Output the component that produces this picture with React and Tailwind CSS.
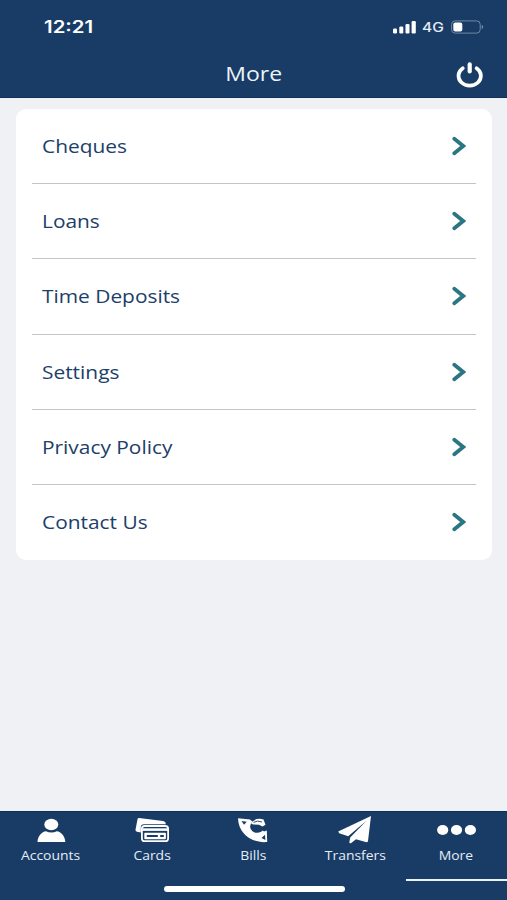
const items = ["Cheques", "Loans", "Time Deposits", "Settings", "Privacy Policy", "Contact Us"];

const tabs = [
  { label: "Accounts",  icon: <UserIcon /> },
  { label: "Cards",     icon: <CardsIcon /> },
  { label: "Bills",     icon: <BillsIcon /> },
  { label: "Transfers", icon: <PlaneIcon /> },
  { label: "More",      icon: <DotsIcon />, active: true },
];

export default function App() {
  return (
    <div className="flex h-[900px] w-[507px] flex-col overflow-hidden bg-[#eff1f5] font-['Open_Sans',sans-serif]">
      {/* Status bar + title */}
      <header className="h-[98px] shrink-0 border-b border-[#0f2f57] bg-[#183c66] text-white">
        <div className="flex h-[54px] items-center pl-[44px] pr-[23px]">
          <span className="origin-left scale-x-[1.2] font-['Inter',sans-serif] text-[17px] font-semibold leading-none">
            12:21
          </span>
          <div className="ml-auto flex items-center">
            <SignalIcon />
            <span className="ml-[6px] w-[22px] origin-left scale-x-[1.2] font-['Inter',sans-serif] text-[13px] font-medium leading-none text-[#e3ebf5]">
              4G
            </span>
            <BatteryIcon />
          </div>
        </div>
        <div className="grid h-[40px] grid-cols-[1fr_auto_1fr] items-center pr-[23px]">
          <h1 className="col-start-2 ml-[23px] scale-x-[1.15] text-[20px] leading-none text-[#eef3f9]">More</h1>
          <button className="mt-[2px] justify-self-end" aria-label="Log out">
            <PowerIcon />
          </button>
        </div>
      </header>

      {/* Menu */}
      <main className="flex-1 pl-4 pr-[15px] pt-[11px]">
        <ul className="flex h-[451px] flex-col rounded-[10px] bg-white px-4 pb-[1px]">
          {items.map((item) => (
            <li
              key={item}
              className="flex flex-1 items-center border-b-[1.5px] border-[#c4c5c8] pl-[10px] pr-[10px] last:border-b-0"
            >
              <span className="origin-left scale-x-[1.16] text-[18px] leading-none text-[#1c4069]">{item}</span>
              <ChevronIcon />
            </li>
          ))}
        </ul>
      </main>

      {/* Tab bar */}
      <nav className="flex h-[89px] shrink-0 flex-col border-t border-[#0f2f57] bg-[#183c66]">
        <div className="grid h-[69px] grid-cols-5">
          {tabs.map((tab) => (
            <div
              key={tab.label}
              className={`flex flex-col items-center border-b-2 pt-[3px] ${tab.active ? "border-[#e8f3fb]" : "border-transparent"}`}
            >
              {tab.icon}
              <span className="mt-[4px] scale-x-[1.16] text-[12px] leading-[14px] text-[#e6edf6]">{tab.label}</span>
            </div>
          ))}
        </div>
        <div className="ml-[164px] mt-[5px] h-[6px] w-[181px] rounded-full bg-white" />
      </nav>
    </div>
  );
}

// ── Icons ────────────────────────────────────────────────────────────────────
function SignalIcon() {
  return (
    <svg width="23" height="14" viewBox="0 0 23 14" fill="#fff">
      <rect x="0" y="8.5" width="4" height="5" rx="1.2" />
      <rect x="6.3" y="6.5" width="4" height="7" rx="1.2" />
      <rect x="12.5" y="4" width="4" height="9.5" rx="1.2" />
      <rect x="18.6" y="1" width="4.2" height="12.5" rx="1.2" />
    </svg>
  );
}

function BatteryIcon() {
  return (
    <svg className="ml-[7px]" width="33" height="14" viewBox="0 0 33 14">
      <rect x=".6" y=".9" width="28.6" height="12.2" rx="3.5" fill="none" stroke="#7189a5" strokeWidth="1" />
      <rect x="2.3" y="2.6" width="9" height="8.8" rx="2" fill="#fff" />
      <path d="M30.7 5c2 .5 2 3.5 0 4z" fill="#7189a5" />
    </svg>
  );
}

function PowerIcon() {
  return (
    <svg width="28" height="26" viewBox="0 0 28 26" fill="none" stroke="#fff" strokeLinecap="round">
      <path d="M6.8 6.3A11.2 9.7 0 1 0 20.6 6.3" strokeWidth="3.7" />
      <path d="M13.7 2.4v7" strokeWidth="4.2" />
    </svg>
  );
}

function ChevronIcon() {
  return (
    <svg className="ml-auto" width="14" height="20" viewBox="0 0 14 20" fill="none" stroke="#2b7683" strokeWidth="3.8" strokeLinecap="round">
      <path d="M2.3 2.8 11.2 10 2.3 17.2" strokeLinejoin="miter" />
    </svg>
  );
}

function UserIcon() {
  return (
    <svg width="36" height="30" viewBox="0 0 36 30" fill="#fff">
      <ellipse cx="18.3" cy="9.5" rx="7" ry="5.7" />
      <path d="M4.5 27c.3-6.5 4.5-10.3 8.5-10.8 3.2 1.6 7.6 1.6 10.8 0 4 .5 8.2 4.3 8.5 10.8z" />
    </svg>
  );
}

function CardsIcon() {
  return (
    <svg width="36" height="30" viewBox="0 0 36 30">
      <path d="M5 3 29 6Q31.8 6.5 31.8 9.2H10Q6.8 9.2 6.8 12.5V17.5L3 16.8Q1.2 16.5 1.5 14.8L3.5 4.2Q3.8 2.900 5 3z" fill="#fff" />
      <rect x="7.9" y="11" width="26.2" height="15.2" rx="2.8" fill="#183c66" stroke="#fff" strokeWidth="1.8" />
      <path d="M8.5 14.6h25.500" stroke="#fff" strokeWidth="2.6" />
      <rect x="10.3" y="17.8" width="21.6" height="6.400" rx=".8" fill="#fff" />
      <path d="M12.8 21h11M26.2 21h3.600" stroke="#183c66" strokeWidth="2" />
    </svg>
  );
}

function BillsIcon() {
  return (
    <svg width="36" height="30" viewBox="0 0 36 30">
      {/* crescent */}
      <path d="M3 3.3 15 4.500 29 16.500 31.800 15.500 32.200 27C18 28.500 3.500 19.500 3 3.300z" fill="#fff" />
      <path d="M6.500 6 11.800 6.800 9 9.800z" fill="#183c66" />
      <path d="M26.500 23 30 19.800 30.400 25z" fill="#183c66" />
      {/* globe */}
      <ellipse cx="22.3" cy="11.6" rx="7.2" ry="6.2" fill="#183c66" />
      <path d="M15.800 8Q21 2.200 28.500 4.500L30.500 9.800 27.500 11.600 24 9.700 18 9.500z" fill="#fff" />
      <path d="M18.500 7.400Q22.500 5 27 7" fill="none" stroke="#183c66" strokeWidth=".9" />
    </svg>
  );
}

function PlaneIcon() {
  return (
    <svg width="36" height="30" viewBox="0 0 36 30" fill="#fff">
      <path d="M34 1 1.2 16.5 2.2 18.2 11.2 21.2 29.5 5.8 13.2 22.6 12.300 27.500Q13 29 14.500 27.800L19 24.200 29.500 27.300Q30.800 27.300 31 26z" />
    </svg>
  );
}

function DotsIcon() {
  return (
    <svg className="overflow-visible" width="36" height="30" viewBox="0 0 36 30" fill="#fff">
      <ellipse cx="4.7" cy="15" rx="5.6" ry="4.9" />
      <ellipse cx="18.5" cy="15" rx="5.6" ry="4.9" />
      <ellipse cx="32.4" cy="15" rx="5.6" ry="4.9" />
    </svg>
  );
}
